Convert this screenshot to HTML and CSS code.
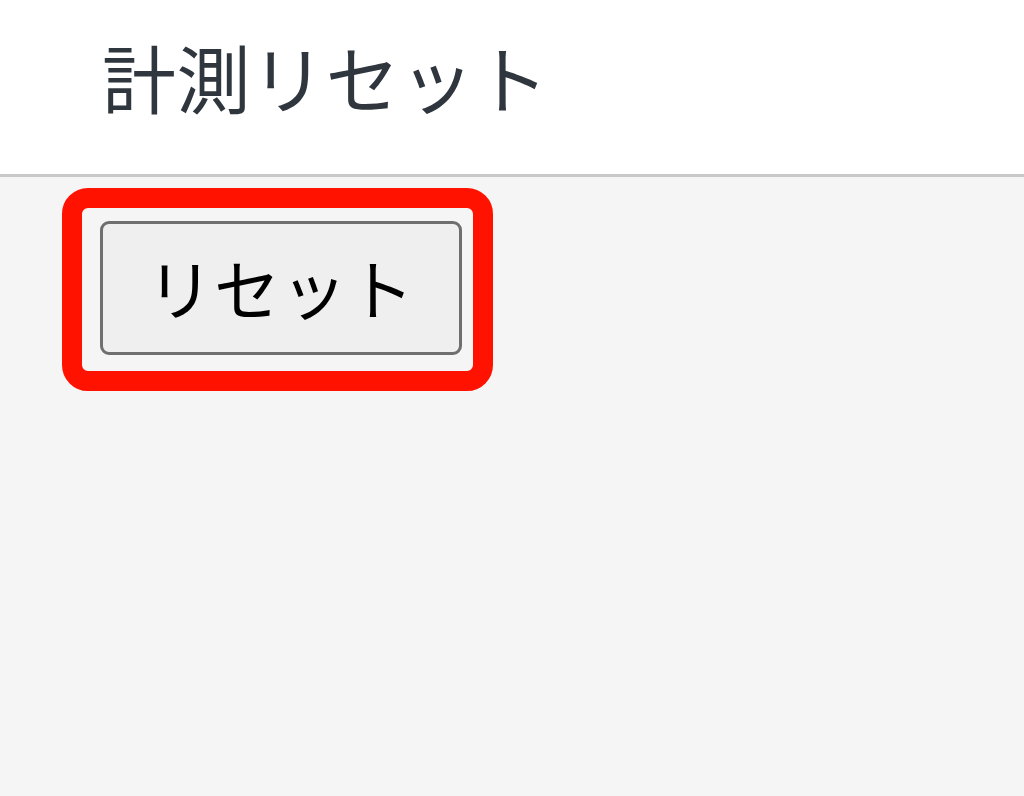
FILE: index.html
```html
<!DOCTYPE html>
<html lang="ja">
<head>
<meta charset="utf-8">
<title>計測リセット</title>
<link rel="stylesheet" href="styles.css">
</head>
<body>
<header class="header">
  <h1 class="title">計測リセット</h1>
</header>
<main class="content">
  <div class="highlight">
    <button class="reset-btn" type="button">リセット</button>
  </div>
</main>
</body>
</html>
```
FILE: styles.css
```css
html, body {
  margin: 0;
  padding: 0;
}
body {
  background: #f5f5f5;
  font-family: "Noto Sans CJK JP", "Noto Sans", sans-serif;
  height: 796px;
  overflow: hidden;
}
.header {
  background: #ffffff;
  height: 174px;
  border-bottom: 3px solid #c8c8c8;
  display: flex;
  align-items: center;
  padding-left: 102px;
  box-sizing: content-box;
}
.title {
  margin: 0;
  font-size: 74px;
  font-weight: 400;
  letter-spacing: 0.5px;
  color: #2f363d;
  line-height: 1;
  padding-bottom: 22px;
}
.content {
  padding: 11px 0 0 62px;
}
.highlight {
  display: inline-block;
  border: 20px solid #ff1200;
  border-radius: 26px;
  padding: 13px 11px 16px 18px;
}
.reset-btn {
  display: block;
  width: 362px;
  height: 134px;
  border: 3px solid #6f6f6f;
  border-radius: 9px;
  background: #efefef;
  color: #000000;
  font-family: "Noto Sans CJK JP", "Noto Sans", sans-serif;
  font-size: 66px;
  letter-spacing: 1px;
  padding: 0 0 4px 0;
  line-height: 1;
}
```
